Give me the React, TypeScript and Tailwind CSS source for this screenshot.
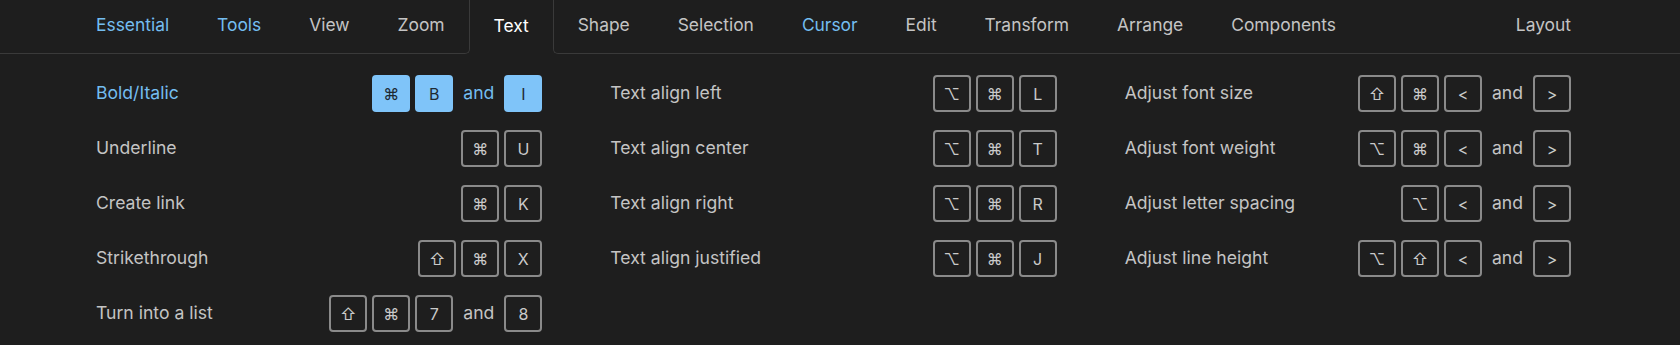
import React from 'react';

type Item = { label: string; keys: (string | null)[]; active?: boolean };

// null in the keys list renders the word "and"
const columns: Item[][] = [
  [
    { label: 'Bold/Italic', keys: ['⌘', 'B', null, 'I'], active: true },
    { label: 'Underline', keys: ['⌘', 'U'] },
    { label: 'Create link', keys: ['⌘', 'K'] },
    { label: 'Strikethrough', keys: ['⇧', '⌘', 'X'] },
    { label: 'Turn into a list', keys: ['⇧', '⌘', '7', null, '8'] },
  ],
  [
    { label: 'Text align left', keys: ['⌥', '⌘', 'L'] },
    { label: 'Text align center', keys: ['⌥', '⌘', 'T'] },
    { label: 'Text align right', keys: ['⌥', '⌘', 'R'] },
    { label: 'Text align justified', keys: ['⌥', '⌘', 'J'] },
  ],
  [
    { label: 'Adjust font size', keys: ['⇧', '⌘', '<', null, '>'] },
    { label: 'Adjust font weight', keys: ['⌥', '⌘', '<', null, '>'] },
    { label: 'Adjust letter spacing', keys: ['⌥', '<', null, '>'] },
    { label: 'Adjust line height', keys: ['⌥', '⇧', '<', null, '>'] },
  ],
];

function Tab({ label, blue, active }: { label: string; blue?: boolean; active?: boolean }) {
  return (
    <div
      className={
        'flex items-center px-6 pb-[2px] text-[17.4px] ' +
        (active ? 'text-white' : blue ? 'text-[#74bdf0]' : 'text-[#c4c4c4]')
      }
    >
      {label}
    </div>
  );
}

function Key({ k, active }: { k: string; active?: boolean }) {
  return (
    <div
      className={
        "flex h-[37px] w-[38px] items-center justify-center rounded-[4px] text-[16px] font-['Inter','DejaVu_Sans',sans-serif] " +
        (active
          ? 'bg-[#7fc4f9] text-[#1e2a33]'
          : 'border-2 border-[#8a8a8a] text-[#cacaca]')
      }
    >
      {k}
    </div>
  );
}

function Row({ item }: { item: Item }) {
  return (
    <div className="flex h-[37px] items-center justify-between">
      <span className={item.active ? 'text-[#74bdf0]' : 'text-[#c4c4c4]'}>{item.label}</span>
      <div className="flex items-center gap-[5px]">
        {item.keys.map((k, i) =>
          k === null ? (
            <span key={i} className={'px-[5px] ' + (item.active ? 'text-[#74bdf0]' : 'text-[#c4c4c4]')}>
              and
            </span>
          ) : (
            <Key key={i} k={k} active={item.active} />
          ),
        )}
      </div>
    </div>
  );
}

export default function App() {
  return (
    <div className="h-[345px] w-[1680px] overflow-hidden bg-[#1e1e1e] font-['Inter',sans-serif] text-[17.6px]">
      {/* TAB BAR */}
      <div className="flex h-[54px]">
        <div className="flex rounded-br-[5px] border-r border-b border-[#3a3a3a] pl-[72px]">
          <Tab label="Essential" blue />
          <Tab label="Tools" blue />
          <Tab label="View" />
          <Tab label="Zoom" />
        </div>
        <Tab label="Text" active />
        <div className="flex flex-1 rounded-bl-[5px] border-b border-l border-[#3a3a3a] pr-[85px]">
          <Tab label="Shape" />
          <Tab label="Selection" />
          <Tab label="Cursor" blue />
          <Tab label="Edit" />
          <Tab label="Transform" />
          <Tab label="Arrange" />
          <Tab label="Components" />
          <div className="ml-auto flex">
            <Tab label="Layout" />
          </div>
        </div>
      </div>

      {/* SHORTCUTS */}
      <div className="grid w-[1571px] grid-cols-3 gap-x-[68px] pt-[21px] pl-[96px]">
        {columns.map((col, c) => (
          <div key={c} className="flex flex-col gap-[18px]">
            {col.map((item) => (
              <Row key={item.label} item={item} />
            ))}
          </div>
        ))}
      </div>
    </div>
  );
}
